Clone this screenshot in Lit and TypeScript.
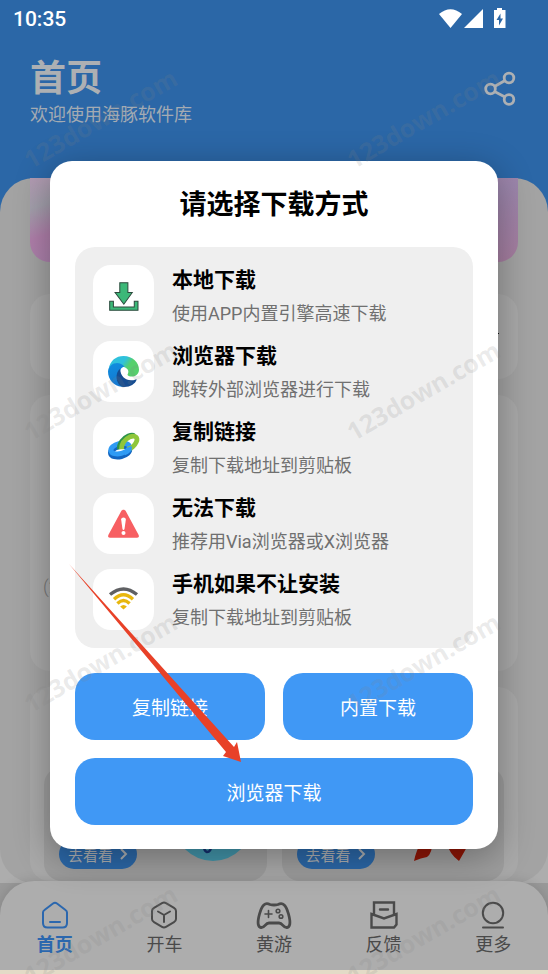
import { LitElement, html, css, svg } from "lit";
import { customElement, property } from "lit/decorators.js";

const icons: Record<string, unknown> = {
  download: svg`<g fill="#3cb878" stroke="#2c4a3d" stroke-width="3">
      <path d="M35 8h24v29h13L47 72 21 37h14z"/>
      <path d="M5 63h11v17h62V63h11v27H5z"/></g>`,
  edge: svg`<defs>
      <linearGradient id="eg" x1="0" y1="0" x2="1" y2=".5"><stop offset=".5" stop-color="#2fc1dc"/><stop offset=".72" stop-color="#55d06c"/></linearGradient>
      <linearGradient id="eb" x1="0" y1="0" x2=".3" y2="1"><stop offset="0" stop-color="#0f8fe0"/><stop offset="1" stop-color="#1577cf"/></linearGradient></defs>
      <path fill="url(#eg)" d="M2 38C6 14 24 0 46 0c28 0 46 20 46 40 0 14-10 21-22 21-10 0-14-4-11-8 4-7 0-17-12-20C34 18 14 20 2 38z"/>
      <path fill="url(#eb)" d="M0 46C2 20 34 12 49 32 37 34 34 44 38 54c5 14 20 24 34 20C66 88 48 92 40 91 18 90 0 70 0 46z"/>
      <path fill="#164d91" d="M36 38C20 50 22 82 42 91.500c20 3 38-7 43-21 0-2-1-2-3-1-22 9-46-5-46-31.500z"/>`,
  link: svg`<g fill="none">
      <ellipse cx="36" cy="57" rx="28" ry="15" stroke="#1265c0" stroke-width="17" transform="rotate(-14 36 57)"/>
      <ellipse cx="36" cy="49" rx="28" ry="15" stroke="#2f9bf4" stroke-width="15" transform="rotate(-14 36 49)"/>
      <path stroke="#2c9349" stroke-width="12" d="M33 51C31 34 44 18 60 11c8-3 15-3 18 0"/>
      <path stroke="#8fc63a" stroke-width="14" d="M40 51C40 36 50 22 66 14c15-6 24 3 18 16-5 11-15 20-27 21"/>
      <path stroke="#2f9bf4" stroke-width="14" d="M48 62c12-4 18-11 15-18"/></g>`,
  warn: svg`<path fill="#f75f62" d="M39 10c3-6 11-6 14 0l38 70c2 5 0 8-5 8H6c-5 0-7-3-5-8z"/>
      <path fill="#fff" d="M39 34c0-8 14-8 14 0l-4 28c-1 4-5 4-6 0z"/><circle cx="46" cy="74" r="6" fill="#fff"/>`,
  wifi: svg`<g fill="none" stroke-width="10">
      <path stroke="#5f6063" d="M6 31Q46-2 86 31"/>
      <path stroke="#e8b70d" d="M18 45Q46 19 74 45M28 58Q46 40 64 58"/></g>
      <path fill="#e8b70d" d="M46 76 36 67q10-9 20 0z"/>`,
  home: svg`<path d="M2 11.500Q2 10 3.500 9L12 2.500q2-1.500 4 0L24.500 9Q26 10 26 11.500V22q0 4.500-4.500 4.500h-15Q2 26.500 2 22zM9 21h10"/>`,
  cube: svg`<path d="M12 2.200q2-1.200 4 0l8 4.600q2 1.200 2 3.200v8q0 2-2 3.200l-8 4.600q-2 1.200-4 0l-8-4.600Q2 20 2 18v-8q0-2 2-3.200zM8 10.500l6 3.500 6-3.500M14 14v7"/>`,
  pad: svg`<path stroke-width="2.800" d="M10 3.500C5 1 2 4-.5 13-3 22-2 26 1 26.500c4 .5 4-4.500 8-4.500h10c4 0 4 5 8 4.500 3-.5 4-4.500 1.500-13.500C26 4 23 1 18 3.500q-4 1-8 0z"/><path stroke-width="1.600" d="M5 13h7M8.500 9.500v7"/><circle stroke-width="1.600" cx="18" cy="10" r="1.800"/><circle stroke-width="1.600" cx="21" cy="15.500" r="1.800"/>`,
  feedback: svg`<path stroke-linejoin="miter" stroke-width="2.400" d="M4 13V1.500h20V13M1.500 13 14 17.500 26.500 13v10.500l-2.500 3H1.500zM10 8.500h8"/>`,
  more: svg`<circle cx="14" cy="12" r="10.200"/><path d="M4 26.500h20"/>`,
};

@customElement("method-item")
class MethodItem extends LitElement {
  @property() icon = "";
  @property() heading = "";
  @property() note = "";
  static styles = css`
    :host { display: flex; gap: 18px; align-items: center; height: 61px; }
    .tile { flex: none; width: 61px; height: 61px; border-radius: 18px; background: #fff; display: grid; place-items: center; }
    svg { width: 31px; height: 31px; overflow: visible; }
    .text { padding-top: 2px; white-space: nowrap; }
    h3, p { margin: 0; line-height: 34px; }
    h3 { font-size: 21px; font-weight: 700; color: #000; }
    p { font-size: 18px; color: #707070; }
  `;
  render() {
    return html`<div class="tile"><svg viewBox="0 0 92 92" aria-hidden="true">${icons[this.icon]}</svg></div>
      <div class="text"><h3>${this.heading}</h3><p>${this.note}</p></div>`;
  }
}

@customElement("app-root")
class AppRoot extends LitElement {
  methods = [
    ["download", "本地下载", "使用APP内置引擎高速下载"],
    ["edge", "浏览器下载", "跳转外部浏览器进行下载"],
    ["link", "复制链接", "复制下载地址到剪贴板"],
    ["warn", "无法下载", "推荐用Via浏览器或X浏览器"],
    ["wifi", "手机如果不让安装", "复制下载地址到剪贴板"],
  ];
  tabs = [["home", "首页"], ["cube", "开车"], ["pad", "黄游"], ["feedback", "反馈"], ["more", "更多"]];

  static styles = css`
    :host { position: relative; display: flex; flex-direction: column; min-height: 100vh; overflow: hidden; background: #2b67a7; font-family: Roboto, "Noto Sans CJK SC", sans-serif; }
    * { box-sizing: border-box; }
    h1, h2, p { margin: 0; }
    button { font: inherit; border: 0; padding: 0; cursor: pointer; }

    .status { display: flex; justify-content: space-between; align-items: center; height: 38px; padding: 0 40px 0 13px; color: #fff; font-size: 21px; font-weight: 500; }
    .status svg { width: 69px; height: 22px; }
    .head { display: flex; justify-content: space-between; height: 140px; padding: 19px 32px 0 30px; color: #adb0b3; }
    .head h1 { font-size: 36px; line-height: 44px; font-weight: 700; }
    .head p { font-size: 18px; line-height: 28px; color: #a4abb3; }
    .share { align-self: flex-start; margin-top: 14px; background: none; color: inherit; height: 36px; }
    .share svg { width: 32px; height: 36px; display: block; }

    .body { flex: 1; display: flex; background: linear-gradient(#2b67a7 50%, #adadad 50%); }
    .sheet { flex: 1; display: flex; flex-direction: column; gap: 16px; padding: 0 30px 2px; border-radius: 34px; background: #a3a3a3; }
    .banner { height: 84px; margin-bottom: 16px; border-radius: 0 0 20px 20px; background: linear-gradient(160deg, #b29ab2, #a3a0ac 12%, #b07fab 24%, #9c86ac 70%, #a67d9f); }
    .card { border-radius: 20px; background: #a9a9a9; }
    .notice { height: 85px; display: flex; align-items: center; justify-content: flex-end; padding: 0 19px 6px 0; }
    .notice i { width: 3px; height: 1px; background: #111; }
    .feed { height: 276px; padding: 181px 13px 0; font-size: 18px; line-height: 22px; font-weight: 300; color: #777; }
    .promos { flex: 1; display: grid; grid-template-columns: 1fr 1fr; gap: 15px; padding: 80px 14px 0; }
    .promo { display: flex; justify-content: space-between; align-items: flex-end; padding: 0 14px 12px 15px; border-radius: 18px; background: #9d9d9d; }
    .go { display: flex; align-items: center; justify-content: center; gap: 7px; width: 78px; height: 30px; border-radius: 15px; background: #2b67a7; color: #adb0b3; font-size: 15px; }
    .go svg { width: 8px; height: 12px; }
    .promo .art { width: 80px; height: 80px; margin-bottom: 7px; }

    .nav-wrap { background: #999; }
    nav { display: flex; height: 89px; margin-top: -2px; padding-top: 20px; border-radius: 34px 34px 0 0; background: #adadad; box-shadow: 0 0 12px rgba(0,0,0,.15); }
    nav a { flex: 1; display: flex; flex-direction: column; align-items: center; text-decoration: none; color: #4a4a4a; font-size: 18px; line-height: 30px; }
    nav svg { width: 28px; height: 29px; overflow: visible; fill: none; stroke: currentColor; stroke-width: 2; stroke-linecap: round; stroke-linejoin: round; }
    nav a.on { color: #2b67ae; font-weight: 700; }
    .strip { height: 4px; background: #e3dbc7; }

    .overlay { position: absolute; inset: 0; display: grid; align-items: center; padding: 36px 50px 0; }
    .dialog { padding: 22px 25px 24px; border-radius: 22px; background: #fff; box-shadow: 0 8px 36px rgba(0,0,0,.32); }
    .dialog h2 { margin-bottom: 20px; text-align: center; font-size: 27px; line-height: 44px; font-weight: 700; color: #000; }
    .list { display: flex; flex-direction: column; gap: 15px; padding: 18px; border-radius: 20px; background: #efefef; }
    .actions { display: grid; grid-template-columns: 1fr 1fr; gap: 18px; margin-top: 25px; }
    .actions button { height: 67px; border-radius: 20px; background: #4098f5; color: #fff; font-size: 19px; font-weight: 400; }
    .actions .wide { grid-column: span 2; }

    .marks { position: absolute; inset: 0; overflow: hidden; pointer-events: none; }
    .marks div { display: grid; grid-template-columns: 323px 323px; grid-auto-rows: 272px; place-items: center; margin: -18px 0 0 -61px; }
    .marks span { transform: rotate(-30deg); font: 700 25px "Open Sans", sans-serif; color: rgba(130,130,130,.17); }
    .arrow { position: absolute; left: 69px; top: 564px; width: 173px; height: 198px; pointer-events: none; }
  `;

  go() {
    return html`<button class="go">去看看<svg viewBox="0 0 8 12" fill="none" stroke="currentColor" stroke-width="2"><path d="M1 1l5 5-5 5"/></svg></button>`;
  }

  render() {
    return html`
      <div class="status"><span>10:35</span>
        <svg viewBox="0 0 69 22" fill="#fff" aria-hidden="true">
          <path d="M0 6Q11.500-3.500 23 6L11.500 20z"/><path d="M44 1v19H25z"/>
          <path fill-rule="evenodd" d="M58 0h5v2h3.500v18H55V2h3zM61.500 5.500 57.500 12H60v5.500l4-7h-2.500z"/></svg>
      </div>
      <header class="head">
        <div><h1>首页</h1><p>欢迎使用海豚软件库</p></div>
        <button class="share" aria-label="分享"><svg viewBox="0 0 32 36" fill="none" stroke="currentColor" stroke-width="2.800">
          <circle cx="6.500" cy="18" r="4.800"/><circle cx="25" cy="7" r="4.800"/><circle cx="25" cy="28.500" r="4.800"/><path d="M10.500 15.500 21 9.500M10.500 20.500 21 26"/></svg></button>
      </header>
      <div class="body"><main class="sheet">
        <div class="banner"></div>
        <section class="card notice"><i></i></section>
        <section class="card feed">(2</section>
        <section class="card promos">
          <div class="promo">${this.go()}<svg class="art" viewBox="0 0 80 80"><circle cx="40" cy="40" r="39" fill="#4295aa"/><path d="M31 64q0 5 3 6 4 0 4-6" fill="none" stroke="#14306e" stroke-width="2.500"/></svg></div>
          <div class="promo">${this.go()}<svg class="art" viewBox="0 0 80 80" fill="#8f1505"><path d="M12 58h11q-1 14-6 17-6 1-13 4 2-10 8-21zM35 58h26L49 79Q40 73 35 58z"/></svg></div>
        </section>
      </main></div>
      <div class="nav-wrap"><nav>
        ${this.tabs.map(([icon, label], i) => html`<a href="#" class=${i === 0 ? "on" : ""}><svg viewBox="0 0 28 29" aria-hidden="true">${icons[icon]}</svg>${label}</a>`)}
      </nav></div>
      <div class="strip"></div>
      <div class="overlay"><div class="dialog" role="dialog" aria-labelledby="title">
        <h2 id="title">请选择下载方式</h2>
        <div class="list">${this.methods.map(([icon, heading, note]) => html`<method-item icon=${icon} heading=${heading} note=${note}></method-item>`)}</div>
        <div class="actions"><button>复制链接</button><button>内置下载</button><button class="wide">浏览器下载</button></div>
      </div></div>
      <div class="marks" aria-hidden="true"><div>${Array.from({ length: 8 }, () => html`<span>123down.com</span>`)}</div></div>
      <svg class="arrow" viewBox="0 0 173 198" aria-hidden="true"><path fill="#e84128" d="M0 0 165 183 168 178 172 198 154 192 157 188z"/></svg>
    `;
  }
}
